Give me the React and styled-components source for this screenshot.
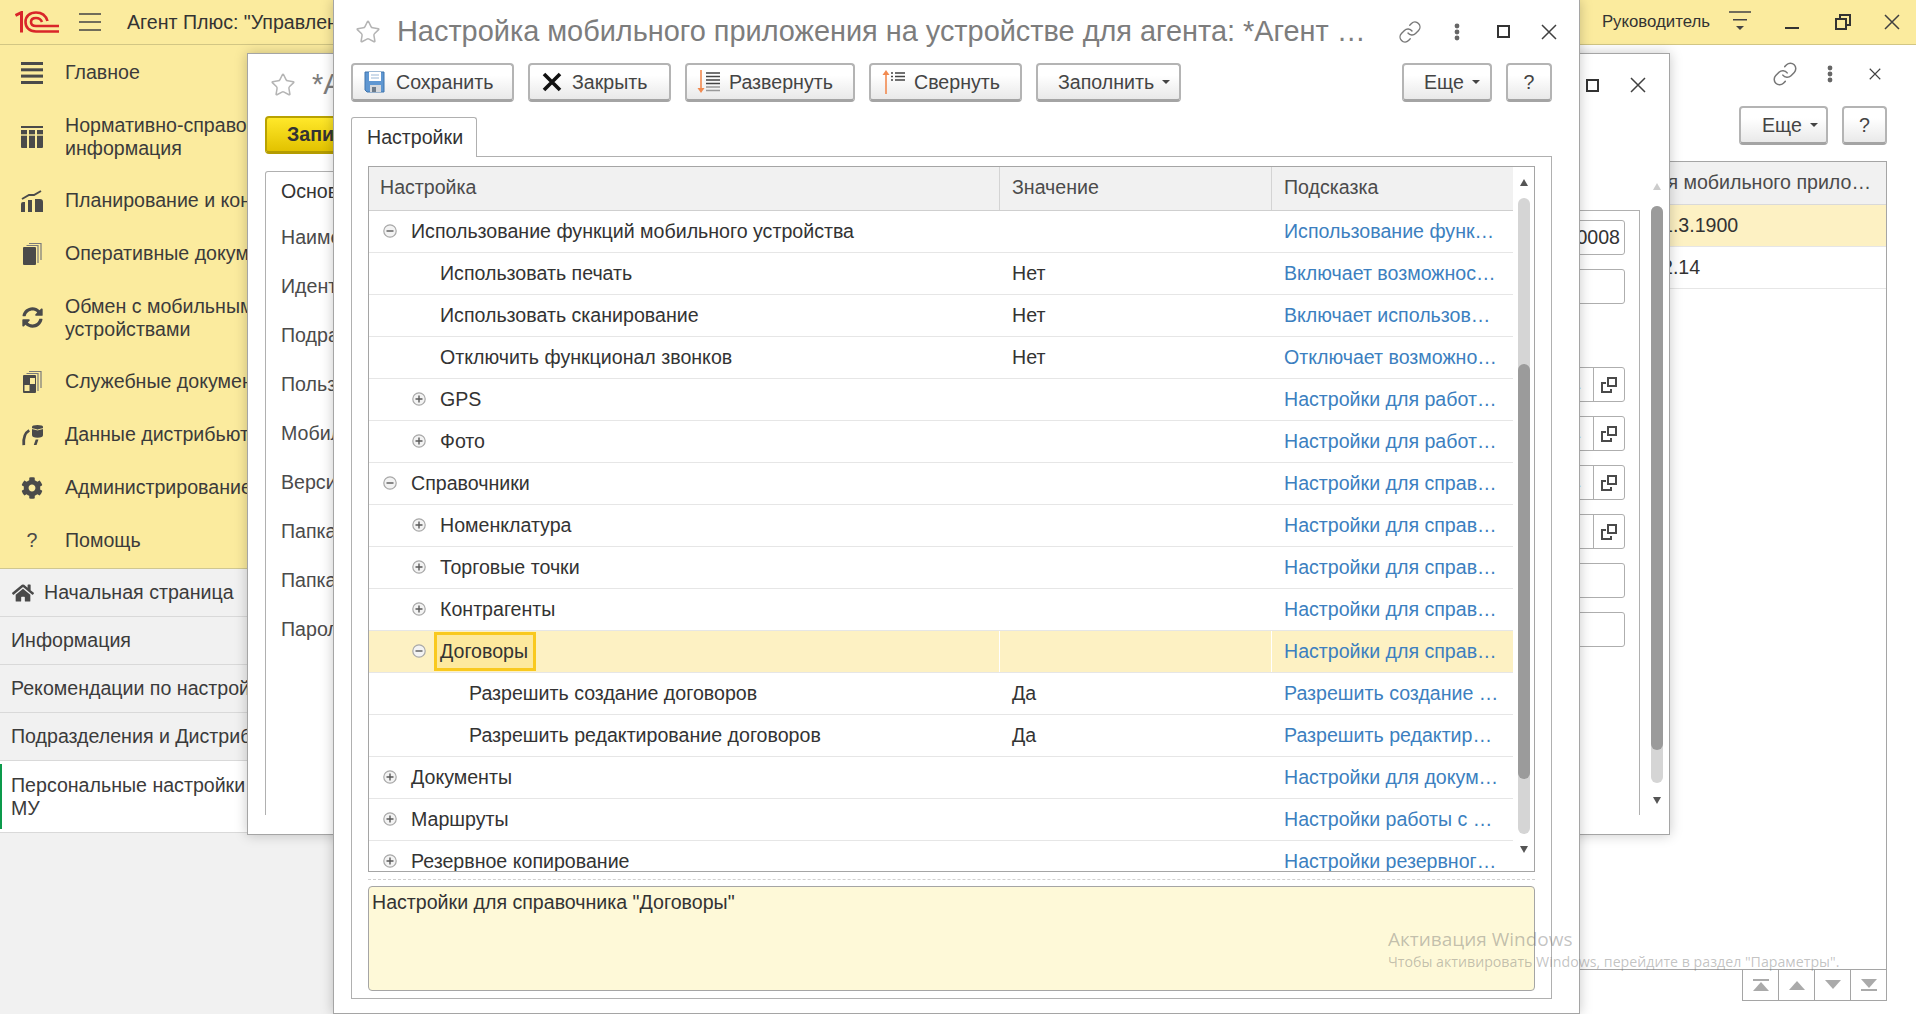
import React from 'react'
import styled, { createGlobalStyle } from 'styled-components'
import { Link, Star } from 'lucide-react'
import { FaCog, FaHome, FaSyncAlt } from 'react-icons/fa'

const GlobalStyle = createGlobalStyle`
  * {
    box-sizing: border-box;
  }

  html, body {
    margin: 0;
    padding: 0;
    height: 100%;
    overflow: hidden;
    background: #f1f1f1;
  }

  body {
    font-family: "Liberation Sans", Arial, sans-serif;
    font-size: 19.6px;
    color: #333;
  }
`

const Page = styled.div`
  position: relative;
  width: 1916px;
  height: 1014px;
  overflow: hidden;
  display: flex;
  flex-direction: column;
`

/* top bar */
const Header = styled.header`
  display: flex;
  align-items: center;
  flex: 0 0 45px;
  height: 45px;
  padding: 0 12px 0 15px;
  background: #fbeb9e;
  border-bottom: 1px solid #d2c684;
`

const Logo = styled.svg`
  width: 44px;
  height: 22px;
  margin-right: 20px;
`

const Burger = styled.svg`
  width: 22px;
  height: 18px;
  margin-right: 26px;
`

const AppTitle = styled.div`
  flex: 1;
  white-space: nowrap;
`

const UserName = styled.div`
  font-size: 16.8px;
  margin-right: 18px;
`

const HeaderIcon = styled.svg`
  width: 24px;
  height: 22px;
  margin-left: ${props => props.$gap || 0}px;
`

/* shell below the top bar */
const Body = styled.div`
  display: flex;
  flex: 1;
  min-height: 0;
`

const Side = styled.aside`
  flex: 0 0 340px;
  display: flex;
  flex-direction: column;
  background: #f1f1f1;
`

const SideMenu = styled.nav`
  flex: 0 0 524px;
  padding-top: 1px;
  background: #fbeb9e;
  border-bottom: 1px solid #cfc791;
`

const SideItem = styled.div`
  display: flex;
  align-items: center;
  height: ${props => props.$tall ? 75 : 53}px;
  padding-left: 21px;
  line-height: 23px;
  white-space: nowrap;
  color: #3b3b3b;
`

const SideIcon = styled.div`
  flex: 0 0 22px;
  height: 24px;
  display: flex;
  align-items: center;
  justify-content: center;
  margin-right: 22px;
  color: #4a4a4a;
`

const Section = styled.div`
  position: relative;
  display: flex;
  align-items: center;
  height: ${props => props.$tall ? 72 : 48}px;
  padding-left: ${props => props.$home ? 12 : 11}px;
  line-height: 23px;
  white-space: nowrap;
  color: #3b3b3b;
  background: ${props => props.$active ? '#fff' : 'transparent'};
  border-bottom: 1px solid #d9d9d9;

  ${props => props.$active ? `
    &:before {
      content: "";
      position: absolute;
      left: 0;
      top: 3px;
      bottom: 3px;
      width: 2px;
      background: #0c9a4b;
    }
  ` : ''}
`

const HomeMark = styled.span`
  display: flex;
  margin-right: 10px;
  color: #4a4a4a;
`

const Content = styled.main`
  flex: 1;
  display: flex;
  flex-direction: column;
  align-items: flex-end;
  padding: 16px 29px 0 0;
  background: #fff;
`

const ContentTools = styled.div`
  display: flex;
  align-items: center;
  height: 26px;
  gap: 29px;
  margin-right: -1px;
`

const ContentBar = styled.div`
  display: flex;
  gap: 14px;
  margin-top: 19px;
`

const MainTable = styled.div`
  width: 400px;
  height: 809px;
  margin-top: 16px;
  border: 1px solid #a5a5a5;
  border-left: 0;
`

const MainHead = styled.div`
  display: flex;
  justify-content: flex-end;
  align-items: center;
  height: 43px;
  padding: 0 15px 2px 0;
  background: #f1f1f1;
  border-bottom: 1px solid #d9d9d9;
  color: #4b4b4b;
`

const MainRow = styled.div`
  display: flex;
  align-items: center;
  height: 42px;
  padding-left: 175px;
  background: ${props => props.$selected ? '#fdf1c3' : '#fff'};
  border-bottom: 1px solid #e6e6e6;
`

const Pager = styled.div`
  display: flex;
  border-left: 1px solid #a5a5a5;
`

const PagerBtn = styled.div`
  width: 36px;
  height: 31px;
  display: flex;
  align-items: center;
  justify-content: center;
  border-right: 1px solid #a5a5a5;
  border-bottom: 1px solid #a5a5a5;
`

/* floating windows */
const Window = styled.section`
  position: absolute;
  isolation: isolate;
  left: ${props => props.$left}px;
  top: ${props => props.$top}px;
  width: ${props => props.$width}px;
  height: ${props => props.$height}px;
  display: flex;
  flex-direction: column;
  background: #fff;
  border: 1px solid #a5a5a5;
  border-top: ${props => props.$top ? '1px solid #a5a5a5' : 0};
  box-shadow: 0 0 12px rgba(0, 0, 0, 0.22);
`

const TitleBar = styled.div`
  display: flex;
  align-items: center;
  height: ${props => props.$height}px;
  flex: 0 0 auto;
  padding: ${props => props.$pad};
`

const WinTitle = styled.h1`
  flex: 1;
  margin: -2px 0 0 16px;
  overflow: hidden;
  white-space: nowrap;
  font-size: 28.9px;
  line-height: 34px;
  font-weight: normal;
  color: #7d7d7d;
`

const WinTools = styled.div`
  display: flex;
  align-items: center;
`

const ToolSlot = styled.div`
  width: ${props => props.$w}px;
  display: flex;
  justify-content: center;
  align-items: center;
`

const Toolbar = styled.div`
  display: flex;
  align-items: flex-start;
  gap: 14px;
  height: 39px;
  padding: 0 27px 0 17px;
  flex: 0 0 auto;
`

const Button = styled.div`
  display: flex;
  align-items: center;
  flex: 0 0 auto;
  width: ${props => props.$w ? `${props.$w}px` : 'auto'};
  height: 39px;
  padding-left: ${props => props.$pad || 0}px;
  justify-content: ${props => props.$center ? 'center' : 'flex-start'};
  margin-left: ${props => props.$push ? 'auto' : 0};
  border: 2px solid #b4b4b4;
  border-bottom: 3px solid #a4a4a4;
  border-radius: 4px;
  background: linear-gradient(#fff 30%, #e9e9e9);
  color: #444;
  white-space: nowrap;
`

const ButtonIcon = styled.svg`
  flex: 0 0 auto;
  width: ${props => props.$w}px;
  height: 24px;
  margin-right: ${props => props.$gap}px;
`

const Caret = styled.span`
  margin-left: 8px;
  width: 0;
  height: 0;
  border-left: 4px solid transparent;
  border-right: 4px solid transparent;
  border-top: 4px solid #444;
`

const SaveButton = styled(Button)`
  width: 300px;
  height: 38px;
  padding-left: 20px;
  border: 2px solid #b9a200;
  border-bottom: 3px solid #b49c00;
  background: linear-gradient(#ffe82a, #e2c200);
  color: #333;
  font-weight: bold;
`

const TabStrip = styled.div`
  display: flex;
  padding: ${props => props.$pad || '15px 27px 0 17px'};
  flex: 0 0 auto;
`

const Tab = styled.div`
  position: relative;
  z-index: 1;
  display: flex;
  align-items: center;
  width: ${props => props.$w}px;
  height: 40px;
  margin-bottom: -1px;
  padding-left: ${props => props.$pad}px;
  background: #fff;
  border: 1px solid #b0b0b0;
  border-bottom: 0;
  border-radius: 3px 3px 0 0;
`

const TabPanel = styled.div`
  display: flex;
  flex-direction: column;
  height: 843px;
  margin: 0 27px 0 17px;
  padding: 9px 16px 0;
  border: 1px solid #b0b0b0;
`

/* settings tree */
const TreeBox = styled.div`
  display: flex;
  flex: 0 0 706px;
  border: 1px solid #a5a5a5;
  overflow: hidden;
`

const TreeBody = styled.div`
  flex: 1;
  overflow: hidden;
`

const TreeHead = styled.div`
  display: grid;
  grid-template-columns: 631px 272px 1fr;
  height: 44px;
  background: #f1f1f1;
  border-bottom: 1px solid #cfcfcf;
  color: #4b4b4b;
`

const HeadCell = styled.div`
  display: flex;
  align-items: center;
  padding: 0 0 2px ${props => props.$pad}px;
  border-right: ${props => props.$last ? 0 : '1px solid #d4d4d4'};
`

const TreeRow = styled.div`
  display: grid;
  grid-template-columns: 631px 272px 1fr;
  height: 42px;
  background: ${props => props.$selected ? '#fdf1c3' : '#fff'};
  border-bottom: 1px solid #e6e6e6;
`

const NameCell = styled.div`
  display: flex;
  align-items: center;
  padding-left: ${props => 14 + props.$level * 29}px;
  border-right: ${props => props.$selected ? '1px solid #fff' : 0};
  white-space: nowrap;
`

const ValueCell = styled.div`
  display: flex;
  align-items: center;
  padding-left: 12px;
  border-right: ${props => props.$selected ? '1px solid #fff' : 0};
`

const HintCell = styled.a`
  display: flex;
  align-items: center;
  padding-left: 12px;
  white-space: nowrap;
  color: #3c7fc0;
`

const ExpanderSlot = styled.svg`
  flex: 0 0 14px;
  width: 14px;
  height: 14px;
  margin-right: 14px;
  margin-top: -2px;
`

const FocusName = styled.span`
  display: flex;
  align-items: center;
  height: 39px;
  margin-left: -6px;
  padding: 0 5px 0 3px;
  background: #fde99e;
  border: 3px solid #f9c91f;
`

const Scroller = styled.div`
  flex: 0 0 ${props => props.$w}px;
  display: flex;
  flex-direction: column;
  align-items: center;
  padding-top: ${props => props.$top}px;
`

const ScrollArrow = styled.div`
  width: 0;
  height: 0;
  border-left: 4px solid transparent;
  border-right: 4px solid transparent;
  ${props => props.$down ? 'border-top' : 'border-bottom'}: 7px solid ${props => props.$color};
`

const ScrollTrack = styled.div`
  width: 12px;
  height: ${props => props.$h}px;
  margin: ${props => props.$gapTop}px 0 ${props => props.$gapBottom}px;
  padding-top: ${props => props.$offset}px;
  background: #d5d5d5;
  border-radius: 6px;
`

const ScrollThumb = styled.div`
  height: ${props => props.$h}px;
  background: #9b9b9b;
  border-radius: 6px;
`

const DashLine = styled.div`
  margin-top: 7px;
  border-top: 1px dashed #cfcfcf;
`

const Description = styled.div`
  height: 105px;
  margin-top: 6px;
  padding: 3px;
  line-height: 24px;
  background: #fef9d8;
  border: 1px solid #a5a5a5;
  border-radius: 4px;
`

/* form window behind the settings window */
const FormWrap = styled.div`
  display: flex;
  flex: 1;
  padding-left: 17px;
  min-height: 0;
`

const FormMain = styled.div`
  flex: 1;
  display: flex;
  flex-direction: column;
  height: 660px;
  margin-right: 5px;
`

const FormPanel = styled.div`
  flex: 1;
  padding: 2px 14px 0 15px;
  border: 1px solid #b0b0b0;
  border-bottom: 0;
`

const FormRow = styled.div`
  display: flex;
  align-items: center;
  justify-content: space-between;
  height: 49px;
`

const FormLabel = styled.div`
  color: #4b4b4b;
`

const Field = styled.div`
  display: flex;
  align-items: center;
  justify-content: flex-end;
  width: 300px;
  height: 35px;
  padding-right: ${props => props.$text ? 4 : 0}px;
  background: #fff;
  border: 1px solid #aeaeae;
  border-radius: 3px;
`

const FieldDots = styled.span`
  margin-right: 12px;
  font-size: 12px;
  line-height: 12px;
  color: #444;
`

const FieldBtn = styled.div`
  flex: 0 0 31px;
  height: 100%;
  display: flex;
  align-items: center;
  justify-content: center;
  border-left: 1px solid #aeaeae;
`

const Watermark = styled.div`
  position: absolute;
  left: 1388px;
  top: 926px;
  pointer-events: none;
  color: rgba(110, 110, 110, 0.42);
`

const WatermarkTitle = styled.div`
  font-family: "Open Sans", "Liberation Sans", sans-serif;
  font-size: 19px;
  line-height: 26px;
`

const WatermarkText = styled.div`
  font-family: "Open Sans", "Liberation Sans", sans-serif;
  font-size: 14.2px;
  line-height: 19px;
  white-space: nowrap;
`

const CloseIcon = ({ size = 16 }) => (
  <svg width={size} height={size} viewBox='0 0 16 16'>
    <path d='M1 1 L15 15 M15 1 L1 15' stroke='#404040' strokeWidth='1.5' fill='none' />
  </svg>
)

const MaxIcon = () => (
  <svg width='13' height='13' viewBox='0 0 13 13'>
    <rect x='1' y='1' width='11' height='11' stroke='#333' strokeWidth='2' fill='none' />
  </svg>
)

const DotsIcon = () => (
  <svg width='6' height='18' viewBox='0 0 6 18'>
    <circle cx='3' cy='3' r='2.4' fill='#666' />
    <circle cx='3' cy='9' r='2.4' fill='#666' />
    <circle cx='3' cy='15' r='2.4' fill='#666' />
  </svg>
)

const Expander = ({ open }) => (
  <ExpanderSlot viewBox='0 0 14 14'>
    <circle cx='7' cy='7' r='6.2' fill='#f3f3f3' stroke='#a8a8a8' strokeWidth='1.2' />
    <path d={open ? 'M3.5 7 H10.5' : 'M3.5 7 H10.5 M7 3.5 V10.5'} stroke='#5a5a5a' strokeWidth='1.4' />
  </ExpanderSlot>
)

const OpenIcon = () => (
  <svg width='16' height='16' viewBox='0 0 16 16'>
    <rect x='7' y='1' width='8' height='8' stroke='#4a4a4a' strokeWidth='2' fill='none' />
    <path d='M5 6 H1 V15 H10 V12' stroke='#4a4a4a' strokeWidth='2' fill='none' />
  </svg>
)

const sideIcons = {
  main: (
    <svg width='22' height='22' viewBox='0 0 22 22' fill='#4a4a4a'>
      <rect y='0' width='22' height='3' />
      <rect y='6.3' width='22' height='3' />
      <rect y='12.6' width='22' height='3' />
      <rect y='19' width='22' height='3' />
    </svg>
  ),
  table: (
    <svg width='22' height='22' viewBox='0 0 22 22' fill='#4a4a4a'>
      <rect y='0' width='22' height='2' />
      <path d='M0 4 H6 V22 H1 Q0 22 0 21 Z M8 4 H14 V22 H8 Z M16 4 H22 V21 Q22 22 21 22 H16 Z' />
      <path d='M0 9 H22' stroke='#fbeb9e' strokeWidth='1.4' />
    </svg>
  ),
  chart: (
    <svg width='22' height='22' viewBox='0 0 22 22'>
      <path d='M0 14 Q0 12 2 12 H4 V22 H0 Z M7 10 H11 V22 H7 Z M14 9 H19 Q22 9 22 12 V22 H14 Z' fill='#4a4a4a' />
      <path d='M1 9 L8 5 L13 5 L20 1' stroke='#4a4a4a' strokeWidth='2' fill='none' />
    </svg>
  ),
  docs: (
    <svg width='22' height='22' viewBox='0 0 22 22'>
      <rect x='2' y='4' width='13' height='18' rx='1' fill='#4a4a4a' />
      <path d='M17 20 V2.5 H5.5 M20 17 V0.5 H8' stroke='#7a7a7a' strokeWidth='1.2' fill='none' />
    </svg>
  ),
  service: (
    <svg width='22' height='22' viewBox='0 0 22 22'>
      <rect x='2' y='4' width='13' height='18' rx='1' fill='#4a4a4a' />
      <rect x='9' y='7' width='5' height='6' fill='#fbeb9e' />
      <rect x='3.5' y='14' width='5' height='6' fill='#fbeb9e' />
      <path d='M17 20 V2.5 H5.5 M20 17 V0.5 H8' stroke='#7a7a7a' strokeWidth='1.2' fill='none' />
    </svg>
  ),
  data: (
    <svg width='22' height='22' viewBox='0 0 24 24'>
      <path d='M12 3 Q12 1 18 1 Q24 1 24 3 V12 Q24 15 18 15 Q12 15 12 12 Z' fill='#4a4a4a' />
      <path d='M12 5 Q18 8 24 5' stroke='#fbeb9e' strokeWidth='1' fill='none' />
      <path d='M9 7 Q2 11 3 23' stroke='#4a4a4a' strokeWidth='3' fill='none' />
      <path d='M14 23 L16 17 L19 17 L17 23 Z' fill='#4a4a4a' />
    </svg>
  ),
  gear: <FaCog size={22} />,
  sync: <FaSyncAlt size={21} />
}

const menu = [
  { icon: sideIcons.main, lines: ['Главное'] },
  { icon: sideIcons.table, lines: ['Нормативно-справочная', 'информация'] },
  { icon: sideIcons.chart, lines: ['Планирование и контроль'] },
  { icon: sideIcons.docs, lines: ['Оперативные документы'] },
  { icon: sideIcons.sync, lines: ['Обмен с мобильными', 'устройствами'] },
  { icon: sideIcons.service, lines: ['Служебные документы'] },
  { icon: sideIcons.data, lines: ['Данные дистрибьютора'] },
  { icon: sideIcons.gear, lines: ['Администрирование'] },
  { icon: '?', lines: ['Помощь'] }
]

const sections = [
  { title: ['Начальная страница'], home: true },
  { title: ['Информация'] },
  { title: ['Рекомендации по настройке'] },
  { title: ['Подразделения и Дистрибьюторы'] },
  { title: ['Персональные настройки', 'МУ'], active: true }
]

const rows = [
  { level: 0, open: true, name: 'Использование функций мобильного устройства', hint: 'Использование функ…' },
  { level: 1, name: 'Использовать печать', value: 'Нет', hint: 'Включает возможнос…' },
  { level: 1, name: 'Использовать сканирование', value: 'Нет', hint: 'Включает использов…' },
  { level: 1, name: 'Отключить функционал звонков', value: 'Нет', hint: 'Отключает возможно…' },
  { level: 1, open: false, name: 'GPS', hint: 'Настройки для работ…' },
  { level: 1, open: false, name: 'Фото', hint: 'Настройки для работ…' },
  { level: 0, open: true, name: 'Справочники', hint: 'Настройки для справ…' },
  { level: 1, open: false, name: 'Номенклатура', hint: 'Настройки для справ…' },
  { level: 1, open: false, name: 'Торговые точки', hint: 'Настройки для справ…' },
  { level: 1, open: false, name: 'Контрагенты', hint: 'Настройки для справ…' },
  { level: 1, open: true, name: 'Договоры', hint: 'Настройки для справ…', selected: true },
  { level: 2, name: 'Разрешить создание договоров', value: 'Да', hint: 'Разрешить создание …' },
  { level: 2, name: 'Разрешить редактирование договоров', value: 'Да', hint: 'Разрешить редактир…' },
  { level: 0, open: false, name: 'Документы', hint: 'Настройки для докум…' },
  { level: 0, open: false, name: 'Маршруты', hint: 'Настройки работы с …' },
  { level: 0, open: false, name: 'Резервное копирование', hint: 'Настройки резервног…' }
]

const formRows = [
  { label: 'Наименование', text: '00000008' },
  { label: 'Идентификатор' },
  { label: 'Подразделение', hidden: true },
  { label: 'Пользователь', open: true, dots: true },
  { label: 'Мобильное приложение', open: true, dots: true },
  { label: 'Версия', open: true, dots: true },
  { label: 'Папка', open: true },
  { label: 'Папка' },
  { label: 'Пароль' }
]

const TreeLine = ({ row }) => {
  const hasToggle = row.open !== undefined
  return (
    <TreeRow $selected={row.selected}>
      <NameCell $level={row.level} $selected={row.selected}>
        {hasToggle
          ? <Expander open={row.open} />
          : <ExpanderSlot as='span' />}
        {row.selected ? <FocusName>{row.name}</FocusName> : row.name}
      </NameCell>
      <ValueCell $selected={row.selected}>{row.value}</ValueCell>
      <HintCell>{row.hint}</HintCell>
    </TreeRow>
  )
}

const SettingsWindow = () => (
  <Window $left={333} $top={0} $width={1247} $height={1014}>
    <TitleBar $height={63} $pad='0 0 0 21px'>
      <Star size={26} strokeWidth={1.4} color='#b4b4b4' />
      <WinTitle>Настройка мобильного приложения на устройстве для агента: *Агент …</WinTitle>
      <WinTools>
        <ToolSlot $w={46}><Link size={24} strokeWidth={1.4} color='#777' /></ToolSlot>
        <ToolSlot $w={47}><DotsIcon /></ToolSlot>
        <ToolSlot $w={46}><MaxIcon /></ToolSlot>
        <ToolSlot $w={46}><CloseIcon /></ToolSlot>
        <ToolSlot $w={7} />
      </WinTools>
    </TitleBar>
    <Toolbar>
      <Button $w={163} $pad={11}>
        <ButtonIcon $w={22} $gap={10} viewBox='0 0 22 24'>
          <path d='M1 2 H20 V22 H3 L1 20 Z' fill='#5f97d2' stroke='#3f74ad' />
          <rect x='5' y='2' width='12' height='9' fill='#fff' />
          <path d='M7 5 H15 M7 8 H15' stroke='#9ab7d6' />
          <rect x='6' y='15' width='11' height='7' fill='#d5d8dc' />
          <rect x='8' y='17' width='4' height='5' fill='#6d7b8a' />
        </ButtonIcon>
        Сохранить
      </Button>
      <Button $w={143} $pad={12}>
        <ButtonIcon $w={20} $gap={10} viewBox='0 0 20 24'>
          <path d='M2 4 L18 20 M18 4 L2 20' stroke='#111' strokeWidth='3.6' fill='none' />
        </ButtonIcon>
        Закрыть
      </Button>
      <Button $w={170} $pad={10}>
        <ButtonIcon $w={24} $gap={8} viewBox='0 0 24 24'>
          <path d='M4 0 V20' stroke='#f28a50' strokeWidth='1.6' />
          <path d='M0.5 18 H7.5 L4 23 Z' fill='#f28a50' />
          <path d='M9 3 H23 M9 6.5 H23 M9 10 H23 M9 13.5 H23' stroke='#444' strokeWidth='1.6' />
          <path d='M9 17 H23 M9 20.5 H23' stroke='#999' strokeWidth='1.6' />
        </ButtonIcon>
        Развернуть
      </Button>
      <Button $w={153} $pad={11}>
        <ButtonIcon $w={24} $gap={8} viewBox='0 0 24 24'>
          <path d='M4 3 V24' stroke='#f28a50' strokeWidth='1.6' />
          <path d='M0.5 5 H7.5 L4 0 Z' fill='#f28a50' />
          <path d='M9 3 H11 M13 3 H23 M9 6.5 H11 M13 6.5 H23 M9 10 H11 M13 10 H23' stroke='#444' strokeWidth='1.6' />
        </ButtonIcon>
        Свернуть
      </Button>
      <Button $w={145} $pad={20}>
        Заполнить
        <Caret />
      </Button>
      <Button $w={90} $pad={20} $push>
        Еще
        <Caret />
      </Button>
      <Button $w={46} $center>?</Button>
    </Toolbar>
    <TabStrip>
      <Tab $w={126} $pad={15}>Настройки</Tab>
    </TabStrip>
    <TabPanel>
      <TreeBox>
        <TreeBody>
          <TreeHead>
            <HeadCell $pad={11}>Настройка</HeadCell>
            <HeadCell $pad={12}>Значение</HeadCell>
            <HeadCell $pad={12} $last>Подсказка</HeadCell>
          </TreeHead>
          {rows.map(row => <TreeLine key={row.name} row={row} />)}
        </TreeBody>
        <Scroller $w={21} $top={12}>
          <ScrollArrow $color='#555' />
          <ScrollTrack $gapTop={12} $gapBottom={12} $h={636} $offset={166}>
            <ScrollThumb $h={415} />
          </ScrollTrack>
          <ScrollArrow $color='#555' $down />
        </Scroller>
      </TreeBox>
      <DashLine />
      <Description>Настройки для справочника "Договоры"</Description>
    </TabPanel>
  </Window>
)

const FormWindow = () => (
  <Window $left={247} $top={53} $width={1423} $height={782}>
    <TitleBar $height={62} $pad='0 8px 0 22px'>
      <Star size={26} strokeWidth={1.4} color='#b4b4b4' />
      <WinTitle>*Агент Плюс</WinTitle>
      <WinTools>
        <ToolSlot $w={46}><MaxIcon /></ToolSlot>
        <ToolSlot $w={46}><CloseIcon /></ToolSlot>
      </WinTools>
    </TitleBar>
    <Toolbar>
      <SaveButton>Записать и закрыть</SaveButton>
    </Toolbar>
    <FormWrap>
      <FormMain>
        <TabStrip $pad='16px 0 0'>
          <Tab $w={110} $pad={15}>Основное</Tab>
        </TabStrip>
        <FormPanel>
          {formRows.map((row, i) => (
            <FormRow key={i}>
              <FormLabel>{row.label}</FormLabel>
              {!row.hidden && (
                <Field $text={row.text}>
                  {row.text}
                  {row.dots && <FieldDots>...</FieldDots>}
                  {row.open && <FieldBtn><OpenIcon /></FieldBtn>}
                </Field>
              )}
            </FormRow>
          ))}
        </FormPanel>
      </FormMain>
      <Scroller $w={24} $top={28}>
        <ScrollArrow $color='#ccc' />
        <ScrollTrack $gapTop={16} $gapBottom={14} $h={577} $offset={0}>
          <ScrollThumb $h={544} />
        </ScrollTrack>
        <ScrollArrow $color='#555' $down />
      </Scroller>
    </FormWrap>
  </Window>
)

const App = () => (
  <Page>
    <GlobalStyle />
    <Header>
      <Logo viewBox='0 0 44 22' fill='none' stroke='#d9262a'>
        <path d='M0.5 4.5 L6.5 1.5 V21.5' strokeWidth='3' />
        <path d='M44 20.5 H21 C14 20.5 10.5 16 10.5 11 C10.5 5 15 1.5 21 1.5 C27 1.5 31 5 32.5 10' strokeWidth='2.6' />
        <path d='M44 15 H21 C18 15 16 13.5 16 11 C16 8.5 18 7 21 7 C24 7 26 8.5 27 11' strokeWidth='2.6' />
      </Logo>
      <Burger viewBox='0 0 22 18'>
        <path d='M0 1 H22 M0 9 H22 M0 17 H22' stroke='#444' strokeWidth='1.5' />
      </Burger>
      <AppTitle>Агент Плюс: "Управление дистрибуцией"</AppTitle>
      <UserName>Руководитель</UserName>
      <HeaderIcon viewBox='0 0 24 22'>
        <path d='M1 1 H23 M5 8.7 H19' stroke='#444' strokeWidth='1.5' />
        <path d='M8 15 H16 L12 19 Z' fill='#444' />
      </HeaderIcon>
      <HeaderIcon $gap={28} viewBox='0 0 24 22'>
        <path d='M5 17 H19' stroke='#333' strokeWidth='2' />
      </HeaderIcon>
      <HeaderIcon $gap={27} viewBox='0 0 24 22'>
        <rect x='5' y='8' width='10' height='10' stroke='#333' strokeWidth='2' fill='none' />
        <path d='M9 7 V4 H19 V14 H16' stroke='#333' strokeWidth='2' fill='none' />
      </HeaderIcon>
      <HeaderIcon $gap={25} viewBox='0 0 24 22'>
        <path d='M5 4 L19 18 M19 4 L5 18' stroke='#404040' strokeWidth='1.5' />
      </HeaderIcon>
    </Header>
    <Body>
      <Side>
        <SideMenu>
          {menu.map(item => (
            <SideItem key={item.lines[0]} $tall={item.lines.length > 1}>
              <SideIcon>{item.icon}</SideIcon>
              <div>{item.lines.map(line => <div key={line}>{line}</div>)}</div>
            </SideItem>
          ))}
        </SideMenu>
        {sections.map(item => (
          <Section key={item.title[0]} $tall={item.title.length > 1} $active={item.active} $home={item.home}>
            {item.home && <HomeMark><FaHome size={22} /></HomeMark>}
            <div>{item.title.map(line => <div key={line}>{line}</div>)}</div>
          </Section>
        ))}
      </Side>
      <Content>
        <ContentTools>
          <Link size={26} strokeWidth={1.4} color='#777' />
          <DotsIcon />
          <ToolSlot $w={26}><CloseIcon size={12} /></ToolSlot>
        </ContentTools>
        <ContentBar>
          <Button $w={89} $pad={21}>
            Еще
            <Caret />
          </Button>
          <Button $w={45} $center>?</Button>
        </ContentBar>
        <MainTable>
          <MainHead>Версия мобильного прило…</MainHead>
          <MainRow $selected>1.3.1900</MainRow>
          <MainRow>2.14</MainRow>
        </MainTable>
        <Pager>
          <PagerBtn>
            <svg width='20' height='16' viewBox='0 0 20 16' fill='#aaa'>
              <rect x='2' y='2' width='16' height='2' />
              <path d='M10 5 L18 14 H2 Z' />
            </svg>
          </PagerBtn>
          <PagerBtn>
            <svg width='18' height='12' viewBox='0 0 18 12' fill='#aaa'>
              <path d='M9 2 L17 11 H1 Z' />
            </svg>
          </PagerBtn>
          <PagerBtn>
            <svg width='18' height='12' viewBox='0 0 18 12' fill='#aaa'>
              <path d='M9 10 L17 1 H1 Z' />
            </svg>
          </PagerBtn>
          <PagerBtn>
            <svg width='20' height='16' viewBox='0 0 20 16' fill='#aaa'>
              <rect x='2' y='12' width='16' height='2' />
              <path d='M10 11 L18 2 H2 Z' />
            </svg>
          </PagerBtn>
        </Pager>
      </Content>
    </Body>
    <FormWindow />
    <SettingsWindow />
    <Watermark>
      <WatermarkTitle>Активация Windows</WatermarkTitle>
      <WatermarkText>Чтобы активировать Windows, перейдите в раздел "Параметры".</WatermarkText>
    </Watermark>
  </Page>
)

export default App
